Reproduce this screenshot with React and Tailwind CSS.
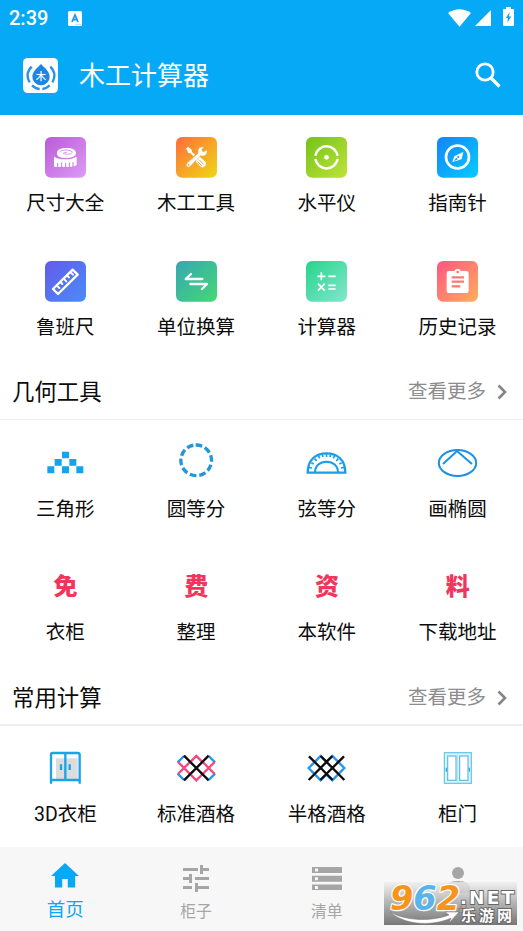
import React from "react";

const SANS = "font-['Roboto','Noto_Sans_CJK_SC',sans-serif]";

/* Every grid icon is drawn on a 123-unit canvas, three units to a pixel. */
function Icon({ children }) {
  return (
    <svg viewBox="0 0 123 123" className="block h-[41px] w-[41px] overflow-visible" fill="none">
      {children}
    </svg>
  );
}

function Tile({ id, from, to, children }) {
  return (
    <Icon>
      <defs>
        <linearGradient id={id} x1="0" y1="0" x2="1" y2="1">
          <stop offset="0" stopColor={from} />
          <stop offset="1" stopColor={to} />
        </linearGradient>
      </defs>
      <rect width="123" height="122" rx="18" fill={`url(#${id})`} />
      {children}
    </Icon>
  );
}

const Tape = () => (
  <Tile id="tape" from="#ba5ad8" to="#dc9cf5">
    <path
      d="M27 62 Q27 59 31 61 Q38 67 60 67 Q84 67 92 59 L95 61 V84 Q90 89 76 90 H30 Q27 90 27 86 Z"
      fill="#fff"
    />
    <path d="M36 47 C36 37 50 33 66 33 C82 33 93 39 93 48 C93 58 80 63 62 63 C46 63 36 58 36 50 Z" fill="#fff" />
    <path d="M44 47 Q46 39 66 39 Q82 40 82 46 Q80 52 67 52 Q58 52 55 49 Q57 46 66 46" stroke="#c873e2" strokeWidth="2.2" />
    <path d="M38 78 V91 M50 76 V91 M62 78 V91 M73 76 V91 M84 75 V91" stroke="#ca78e5" strokeWidth="3" />
  </Tile>
);

const Tools = () => (
  <Tile id="tools" from="#ff6c3c" to="#eed914">
    <path d="M30 34 L37 30 L47 38 L48 45 L57 53 L52 58 L44 49 L37 48 Z" fill="#fff" />
    <path d="M60 66 L70 58 L89 76 Q92 81 87 88 Q80 93 75 90 L60 75 Z" fill="#fff" />
    <path d="M69 68 L83 82 M65 74 L77 86" stroke="#f6a62b" strokeWidth="3" />
    <path
      d="M66 46 Q64 34 75 30 L85 29 L77 39 L82 45 L93 38 Q96 53 83 57 Q78 58 74 56 L43 88 Q37 94 32 88 Q28 83 34 77 L66 49 Z"
      fill="#fff"
      stroke="#f9952c"
      strokeWidth="1.5"
    />
    <circle cx="38" cy="83" r="2.5" fill="#f9952c" />
  </Tile>
);

const Level = () => (
  <Tile id="level" from="#75c21b" to="#bde436">
    <path d="M28 56 A34 34 0 0 1 95 56 M28 66 A34 34 0 0 0 95 66" stroke="#fff" strokeWidth="7.5" />
    <circle cx="61.5" cy="61" r="7" fill="#fff" />
  </Tile>
);

const Compass = () => (
  <Tile id="compass" from="#1285f8" to="#06cbfe">
    <circle cx="61.5" cy="60" r="34.5" stroke="#fff" strokeWidth="8" />
    <path d="M79 45 L74 66 L64 70 L46 75 L52 58 L61 53 Z" fill="#fff" />
    <path d="M50 72 L58 62 L63 67 Z" fill="#109bf9" />
    <circle cx="64" cy="60" r="3.2" fill="#109bf9" />
  </Tile>
);

const Ruler = () => (
  <Tile id="ruler" from="#635aec" to="#4a8df5">
    <path d="M24 84 L83 26 L98 41 L39 99 Z" stroke="#fff" strokeWidth="7" strokeLinejoin="round" />
    <path
      d="M35 73 L43 81 M46 63 L52 69 M56 53 L64 61 M66 43 L72 49 M76 33 L84 41"
      stroke="#fff"
      strokeWidth="6"
      strokeLinecap="round"
    />
  </Tile>
);

const Convert = () => (
  <Tile id="convert" from="#36a7b4" to="#44d873">
    <path
      d="M45 39 L29 54 H79 M43 69 H93 L78 84"
      stroke="#fff"
      strokeWidth="7"
      strokeLinecap="round"
      strokeLinejoin="round"
    />
  </Tile>
);

const Calc = () => (
  <Tile id="calc" from="#26d58b" to="#83e6cf">
    <path
      d="M34 46 H58 M46 34 V58 M67 46 H89 M36 68 L56 89 M56 68 L36 89 M67 73 H89 M67 84 H89"
      stroke="#fff"
      strokeWidth="5"
    />
  </Tile>
);

const History = () => (
  <Tile id="history" from="#ff5582" to="#ffae5c">
    <path
      d="M36 30 H52 Q54 24 62 24 Q70 24 72 30 H88 Q95 30 95 37 V89 Q95 96 88 96 H36 Q29 96 29 89 V37 Q29 30 36 30 Z"
      fill="#fff"
    />
    <circle cx="62" cy="33" r="4" fill="#ff7574" />
    <path d="M44 49 H81 M44 62 H81 M44 76 H70" stroke="#fc7a72" strokeWidth="7" />
  </Tile>
);

const Pyramid = () => (
  <Icon>
    <path
      d="M51 32h21v20h-21z M29 54h21v20h-21z M73 54h21v20h-21z M7 76h21v21h-21z M51 76h21v21h-21z M94 76h21v21h-21z"
      fill="#12a4ef"
    />
  </Icon>
);

const DashedCircle = () => (
  <Icon>
    <circle
      cx="60.5"
      cy="58"
      r="46"
      stroke="#2196d8"
      strokeWidth="10"
      strokeDasharray="20 8.9"
      transform="rotate(-92 60.5 58)"
    />
  </Icon>
);

const Protractor = () => (
  <Icon>
    <path d="M5 95 C5 57 29 37 61.5 37 C94 37 118 57 118 95 Z" stroke="#179fe5" strokeWidth="7" />
    <path d="M27 95 C27 74 42 62 61.5 62 C81 62 96 74 96 95" stroke="#179fe5" strokeWidth="6" />
    <path
      d="M9 79 L18 81 M16 65 L23 69 M26 53 L32 60 M37 44 L41 52 M49 40 L51 48 M61.5 37 V48 M74 40 L72 48 M86 44 L82 52 M97 53 L91 60 M107 65 L100 69 M114 79 L105 81"
      stroke="#179fe5"
      strokeWidth="5"
    />
  </Icon>
);

const Ellipse = () => (
  <Icon>
    <ellipse cx="61.5" cy="66" rx="56" ry="39" stroke="#1c91e4" strokeWidth="6" />
    <path d="M18 69 L60 30 L105 69" stroke="#1c91e4" strokeWidth="6" />
  </Icon>
);

const Glyph = ({ char }) => (
  <span className="flex h-[41px] w-[41px] items-center justify-center font-['Noto_Sans_CJK_SC',sans-serif] text-[24px] leading-none font-black text-[#f0365d]">
    {char}
  </span>
);

const Wardrobe = () => (
  <Icon>
    <path d="M33 31 H98 V97 H33 Z" fill="#dcdcdf" />
    <path
      d="M18 107 V20 Q18 15 23 15 H98 Q104 15 104 20 V107 M18 96 H104 M61 15 V96"
      stroke="#18a4e7"
      strokeWidth="7"
    />
    <path d="M48 49 V66 M74 49 V66" stroke="#18a4e7" strokeWidth="7" />
  </Icon>
);

const RackFull = () => (
  <Icon>
    <g strokeWidth="7">
      <path d="M5 43 L24 24 M98 24 L117 43 M5 77 L24 96 M98 96 L117 77" stroke="#2196f3" />
      <path
        d="M42 43 L61 24 L80 43 M42 78 L61 97 L80 78 M6 42 L42 78 M6 78 L42 42 M80 42 L116 78 M80 78 L116 42"
        stroke="#f3457e"
      />
      <path d="M24 23 L98 97 M98 23 L24 97" stroke="#0b0b0b" />
    </g>
  </Icon>
);

const RackHalf = () => (
  <Icon>
    <g strokeWidth="7">
      <path d="M25 43 L44 24 L61 41 M25 43 L8 60 L44 97 L61 80 M61 41 L79 24 L115 60 L79 97 L61 80" stroke="#2196f3" />
      <path d="M9 25 L80 96 M44 24 L115 96 M114 25 L43 96 M79 24 L8 96" stroke="#0b0b0b" />
    </g>
  </Icon>
);

const Doors = () => (
  <Icon>
    <rect x="22" y="14" width="81" height="92" fill="#d6f5fc" stroke="#62c5ee" strokeWidth="3.5" />
    <rect x="32" y="24" width="25" height="73" fill="#fff" stroke="#6bb5d9" strokeWidth="3.5" />
    <rect x="68" y="24" width="25" height="73" fill="#fff" stroke="#6bb5d9" strokeWidth="3.5" />
    <path d="M62 17 V103" stroke="#a9e4f7" strokeWidth="3" />
    <path d="M28 59 V71 M97 59 V71" stroke="#3ba6dc" strokeWidth="4" />
  </Icon>
);

const toolItems = [
  ["尺寸大全", <Tape />],
  ["木工工具", <Tools />],
  ["水平仪", <Level />],
  ["指南针", <Compass />],
  ["鲁班尺", <Ruler />],
  ["单位换算", <Convert />],
  ["计算器", <Calc />],
  ["历史记录", <History />],
];

const geometryItems = [
  ["三角形", <Pyramid />],
  ["圆等分", <DashedCircle />],
  ["弦等分", <Protractor />],
  ["画椭圆", <Ellipse />],
  ["衣柜", <Glyph char="免" />],
  ["整理", <Glyph char="费" />],
  ["本软件", <Glyph char="资" />],
  ["下载地址", <Glyph char="料" />],
];

const commonItems = [
  ["3D衣柜", <Wardrobe />],
  ["标准酒格", <RackFull />],
  ["半格酒格", <RackHalf />],
  ["柜门", <Doors />],
];

function Grid({ items, cell }) {
  return (
    <div className="grid grid-cols-4">
      {items.map(([label, icon]) => (
        <div key={label} className={`flex h-[123.75px] flex-col items-center ${cell}`}>
          {icon}
          <span className="text-[19.5px] leading-[30px] whitespace-nowrap text-[#0c0c0c]">{label}</span>
        </div>
      ))}
    </div>
  );
}

function SectionHeader({ title, className }) {
  return (
    <div className={`flex items-center justify-between border-[#efefef] pr-[16px] pl-3 ${className}`}>
      <h2 className="text-[22.4px] leading-8 text-[#0c0c0c]">{title}</h2>
      <div className="flex items-center gap-[11px] text-[19.5px] leading-8 text-[#8c8c8c]">
        <span>查看更多</span>
        <svg viewBox="0 0 10 16" className="-mt-px h-4 w-[10px]" fill="none">
          <path d="M1.5 1.5 L8 8 L1.5 14.5" stroke="#858585" strokeWidth="2.6" />
        </svg>
      </div>
    </div>
  );
}

function Header() {
  return (
    <header className="h-[115px] shrink-0 bg-[#05a9f6] text-white">
      <div className="flex h-9 items-center pr-[9px] pl-[9px]">
        <span className="text-[20px] leading-6 font-medium">2:39</span>
        <svg viewBox="0 0 14 15" className="ml-5 h-[15px] w-[14px]">
          <rect width="14" height="15" rx="1.5" fill="#fff" />
          <path d="M4 11 L7 4 L10 11 M5 8.7 H9" stroke="#239ce0" strokeWidth="1.8" fill="none" />
          <path d="M7.5 13.3 H13" stroke="#7fc8ee" strokeWidth="1" strokeDasharray="1.2 .8" />
        </svg>
        <div className="ml-auto flex items-center">
          <svg viewBox="0 0 23 18" className="h-[18px] w-[23px]">
            <path d="M0 4 Q11.5 -3.5 23 4 L11.5 17.7 Z" fill="#fff" />
          </svg>
          <svg viewBox="0 0 16 16" className="mr-3 ml-1 h-4 w-4">
            <path d="M16 0 V16 H0 Z" fill="#fff" />
          </svg>
          <svg viewBox="0 0 11 19" className="-mt-1 h-[19px] w-[11px]">
            <path d="M3 0 H8 V2 H10 Q11 2 11 3 V18 Q11 19 10 19 H1 Q0 19 0 18 V3 Q0 2 1 2 H3 Z" fill="#fff" />
            <path d="M6.7 5 L2.8 11 H5 L4.3 16 L8.3 9.5 H6 Z" fill="#14a5ec" />
          </svg>
        </div>
      </div>
      <div className="flex h-[79px] items-center pr-[22px] pl-[23px]">
        <svg viewBox="0 0 105 105" className="h-[35px] w-[35px]">
          <rect width="105" height="105" rx="14" fill="#fff" />
          <path d="M54 18 C63 28 80 40 80 56 A26 26 0 0 1 28 56 C28 40 45 28 54 18 Z" fill="#1b87e5" />
          <path d="M26 26 Q5 48 20 73 M82 26 Q103 48 88 73" stroke="#2492e9" strokeWidth="7" fill="none" />
          <path d="M27 82 Q39 93 50 93 M58 93 Q70 92 80 82" stroke="#2492e9" strokeWidth="7" fill="none" />
          <text
            x="54"
            y="66"
            textAnchor="middle"
            fontSize="31"
            fontWeight="500"
            fill="#fff"
            className="font-['Noto_Sans_CJK_SC',sans-serif]"
          >
            木
          </text>
        </svg>
        <h1 className="ml-[21px] text-[26px] leading-10">木工计算器</h1>
        <svg viewBox="0 0 26 26" className="-mt-px ml-auto h-[26px] w-[26px]" fill="none" stroke="#fff">
          <circle cx="10" cy="10" r="8.2" strokeWidth="2.8" />
          <path d="M16 16 L24.5 24.5" strokeWidth="3.2" />
        </svg>
      </div>
    </header>
  );
}

function Watermark() {
  return (
    <div className="absolute top-[35px] left-[384px] h-[43px] w-[133px]">
      <svg viewBox="0 0 133 43" className="block h-[43px] w-[133px] overflow-visible">
        <defs>
          <linearGradient id="mark" x1="0" y1="0" x2="0" y2="1">
            <stop offset="0" stopColor="#eeeeee" stopOpacity=".8" />
            <stop offset=".45" stopColor="#b4b4b4" stopOpacity=".95" />
            <stop offset="1" stopColor="#777777" />
          </linearGradient>
        </defs>
        <rect width="133" height="43" fill="url(#mark)" />
        <text x="58" y="36" fontSize="15" fill="#858585" className="font-['Noto_Sans_CJK_SC',sans-serif]">
          我的
        </text>
        <text
          x="6"
          y="27.5"
          className="font-['DejaVu_Sans',sans-serif]"
          fontSize="33.5"
          fontWeight="700"
          fontStyle="italic"
          fill="#f7941e"
          stroke="#fff"
          strokeWidth="2.4"
          paintOrder="stroke"
          strokeLinejoin="round"
        >
          9<tspan fill="#5ab4e8">6</tspan>2
        </text>
        <path
          d="M6 30 C22 44 50 44 67 36 L65 41 L75 30 L61 30 L65 33 C50 39 24 40 6 30 Z"
          fill="#fff"
          stroke="#777"
          strokeWidth=".5"
        />
        <g fill="#fff" stroke="#666" strokeWidth="1.8" paintOrder="stroke" fontWeight="700">
          <text
            x="76"
            y="22"
            fontSize="18.5"
            textLength="54"
            lengthAdjust="spacing"
            className="font-['DejaVu_Sans',sans-serif]"
          >
            .NET
          </text>
          <text
            x="77"
            y="39"
            fontSize="15"
            fontWeight="700"
            textLength="51"
            className="font-['Noto_Sans_CJK_SC',sans-serif]"
          >
            乐游网
          </text>
        </g>
      </svg>
    </div>
  );
}

function BottomNav() {
  return (
    <nav className="relative grid h-[84px] shrink-0 grid-cols-4 bg-[#f7f7f7] text-[#a6a6a6]">
      <div className="flex flex-col items-center pt-4 text-[#08a8f4]">
        <svg viewBox="0 0 28 25" className="h-[25px] w-7" fill="currentColor">
          <path d="M14 0 L28 13 H24.2 V24.5 H16.8 V16 H11.2 V24.5 H4 V13 H0 Z" />
        </svg>
        <span className="mt-2 text-[18.5px] leading-7">首页</span>
      </div>
      <div className="flex flex-col items-center pt-[18px]">
        <svg viewBox="0 0 26 27" className="h-[27px] w-[26px]" fill="currentColor">
          <path d="M0 3h15v3H0z M17 0h3v3h6v3h-6v3h-3z M0 12h6V9h3v9H6v-3H0z M12 12h14v3H12z M0 21h9v3H0z M12 18h3v3h11v3H15v3h-3z" />
        </svg>
        <span className="mt-2 text-[15.8px] leading-6">柜子</span>
      </div>
      <div className="flex flex-col items-center pt-5">
        <svg viewBox="0 0 30 23" className="h-[23px] w-[30px]" fill="currentColor">
          <path fillRule="evenodd" d="M0 0h30v6H0z M3 1.5v3h3v-3z M0 8.7h30v6H0z M3 10.2v3h3v-3z M0 17.4h30v6H0z M3 18.9v3h3v-3z" />
        </svg>
        <span className="mt-[10px] text-[15.8px] leading-6">清单</span>
      </div>
      <div className="flex flex-col items-center pt-5">
        <svg viewBox="0 0 24 26" className="h-[26px] w-6" fill="currentColor">
          <circle cx="12" cy="6" r="6" />
          <path d="M0 26 V21 Q0 14 12 14 Q24 14 24 21 V26 Z" />
        </svg>
      </div>
      <Watermark />
    </nav>
  );
}

export default function App() {
  return (
    <div className={`flex h-[931px] w-[523px] flex-col overflow-hidden bg-white ${SANS}`}>
      <Header />
      <main className="h-[732px] overflow-hidden">
        <Grid items={toolItems} cell="pt-[22px] gap-[11px]" />
        <SectionHeader title="几何工具" className="h-[57px] border-b pt-[3px]" />
        <Grid items={geometryItems} cell="pt-[21.5px] gap-[12.5px]" />
        <SectionHeader title="常用计算" className="h-[59px] border-b-2 pt-[5px]" />
        <Grid items={commonItems} cell="pt-[21.5px] gap-[11.5px]" />
      </main>
      <BottomNav />
    </div>
  );
}
